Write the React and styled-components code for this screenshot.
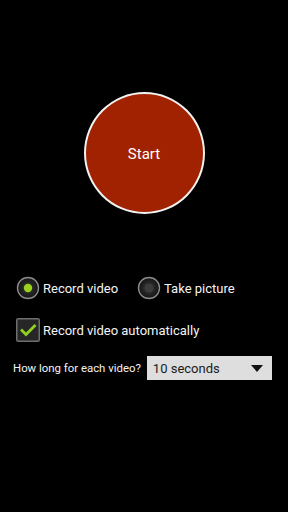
import React from "react";
import styled, { createGlobalStyle } from "styled-components";

const Global = createGlobalStyle`
  html, body { margin: 0; padding: 0; background: #000; }
  body { font-family: Roboto, "Noto Sans", sans-serif; color: #fff; }
`;

const Page = styled.div`
  width: 288px;
  height: 512px;
  background: #000;
  display: flex;
  flex-direction: column;
`;

const CircleWrap = styled.div`
  display: flex;
  justify-content: center;
  padding-top: 92px;
`;

const StartButton = styled.div`
  width: 117px;
  height: 117px;
  border-radius: 50%;
  border: 2px solid #f2f2f2;
  background: #a02200;
  display: flex;
  align-items: center;
  justify-content: center;
  font-size: 15px;
  color: #fff;
  padding-top: 1px;
  box-sizing: content-box;
`;

const Options = styled.div`
  display: flex;
  flex-direction: column;
  padding-top: 62px;
`;

const Row = styled.div`
  display: flex;
  align-items: center;
  padding-left: ${(p) => p.$pl || 16}px;
  margin-bottom: ${(p) => p.$mb || 0}px;
  gap: ${(p) => p.$gap || 0}px;
`;

const Choice = styled.div`
  display: flex;
  align-items: center;
  gap: 3px;
  font-size: 13px;
  color: #f4f4f4;
  margin-right: ${(p) => p.$mr || 0}px;
`;

const Label = styled.span`
  font-size: 11.4px;
  color: #f4f4f4;
`;

const Spinner = styled.div`
  width: 125px;
  height: 24px;
  background: #dedede;
  display: flex;
  align-items: center;
  justify-content: space-between;
  padding: 0 9px 0 6px;
  box-sizing: border-box;
  font-size: 13px;
  color: #1a1a1a;
`;

function Radio({ checked }) {
  return (
    <svg width="24" height="24" viewBox="0 0 24 24">
      <defs>
        <radialGradient id={checked ? "rg1" : "rg2"} cx="50%" cy="50%" r="50%">
          <stop offset="0%" stopColor="#3a3a3a" />
          <stop offset="100%" stopColor="#141414" />
        </radialGradient>
      </defs>
      <circle cx="12" cy="12" r="10.5" fill={`url(#${checked ? "rg1" : "rg2"})`} stroke="#8a8a8a" strokeWidth="1.4" />
      {checked ? (
        <circle cx="12" cy="12" r="4.2" fill="#9bd21e" />
      ) : (
        <circle cx="12" cy="12" r="4.5" fill="#3c3c3c" />
      )}
    </svg>
  );
}

function Check() {
  return (
    <svg width="24" height="24" viewBox="0 0 24 24">
      <rect x="0.75" y="0.75" width="22.5" height="22.5" rx="1.5" fill="#262626" stroke="#6e6e6e" strokeWidth="1.5" />
      <path d="M6 12.5 L10 16.5 L18.5 8" fill="none" stroke="#8fd11c" strokeWidth="2.8" strokeLinecap="square" />
    </svg>
  );
}

function Triangle() {
  return (
    <svg width="12" height="7" viewBox="0 0 12 7">
      <path d="M0 0 H12 L6 7 Z" fill="#111" />
    </svg>
  );
}

export default function App() {
  return (
    <Page>
      <Global />
      <CircleWrap>
        <StartButton>Start</StartButton>
      </CircleWrap>
      <Options>
        <Row $mb={18}>
          <Choice $mr={19}>
            <Radio checked />
            <span>Record video</span>
          </Choice>
          <Choice>
            <Radio />
            <span>Take picture</span>
          </Choice>
        </Row>
        <Row $mb={14}>
          <Choice>
            <Check />
            <span>Record video automatically</span>
          </Choice>
        </Row>
        <Row $pl={13} $gap={6}>
          <Label>How long for each video?</Label>
          <Spinner>
            <span>10 seconds</span>
            <Triangle />
          </Spinner>
        </Row>
      </Options>
    </Page>
  );
}
